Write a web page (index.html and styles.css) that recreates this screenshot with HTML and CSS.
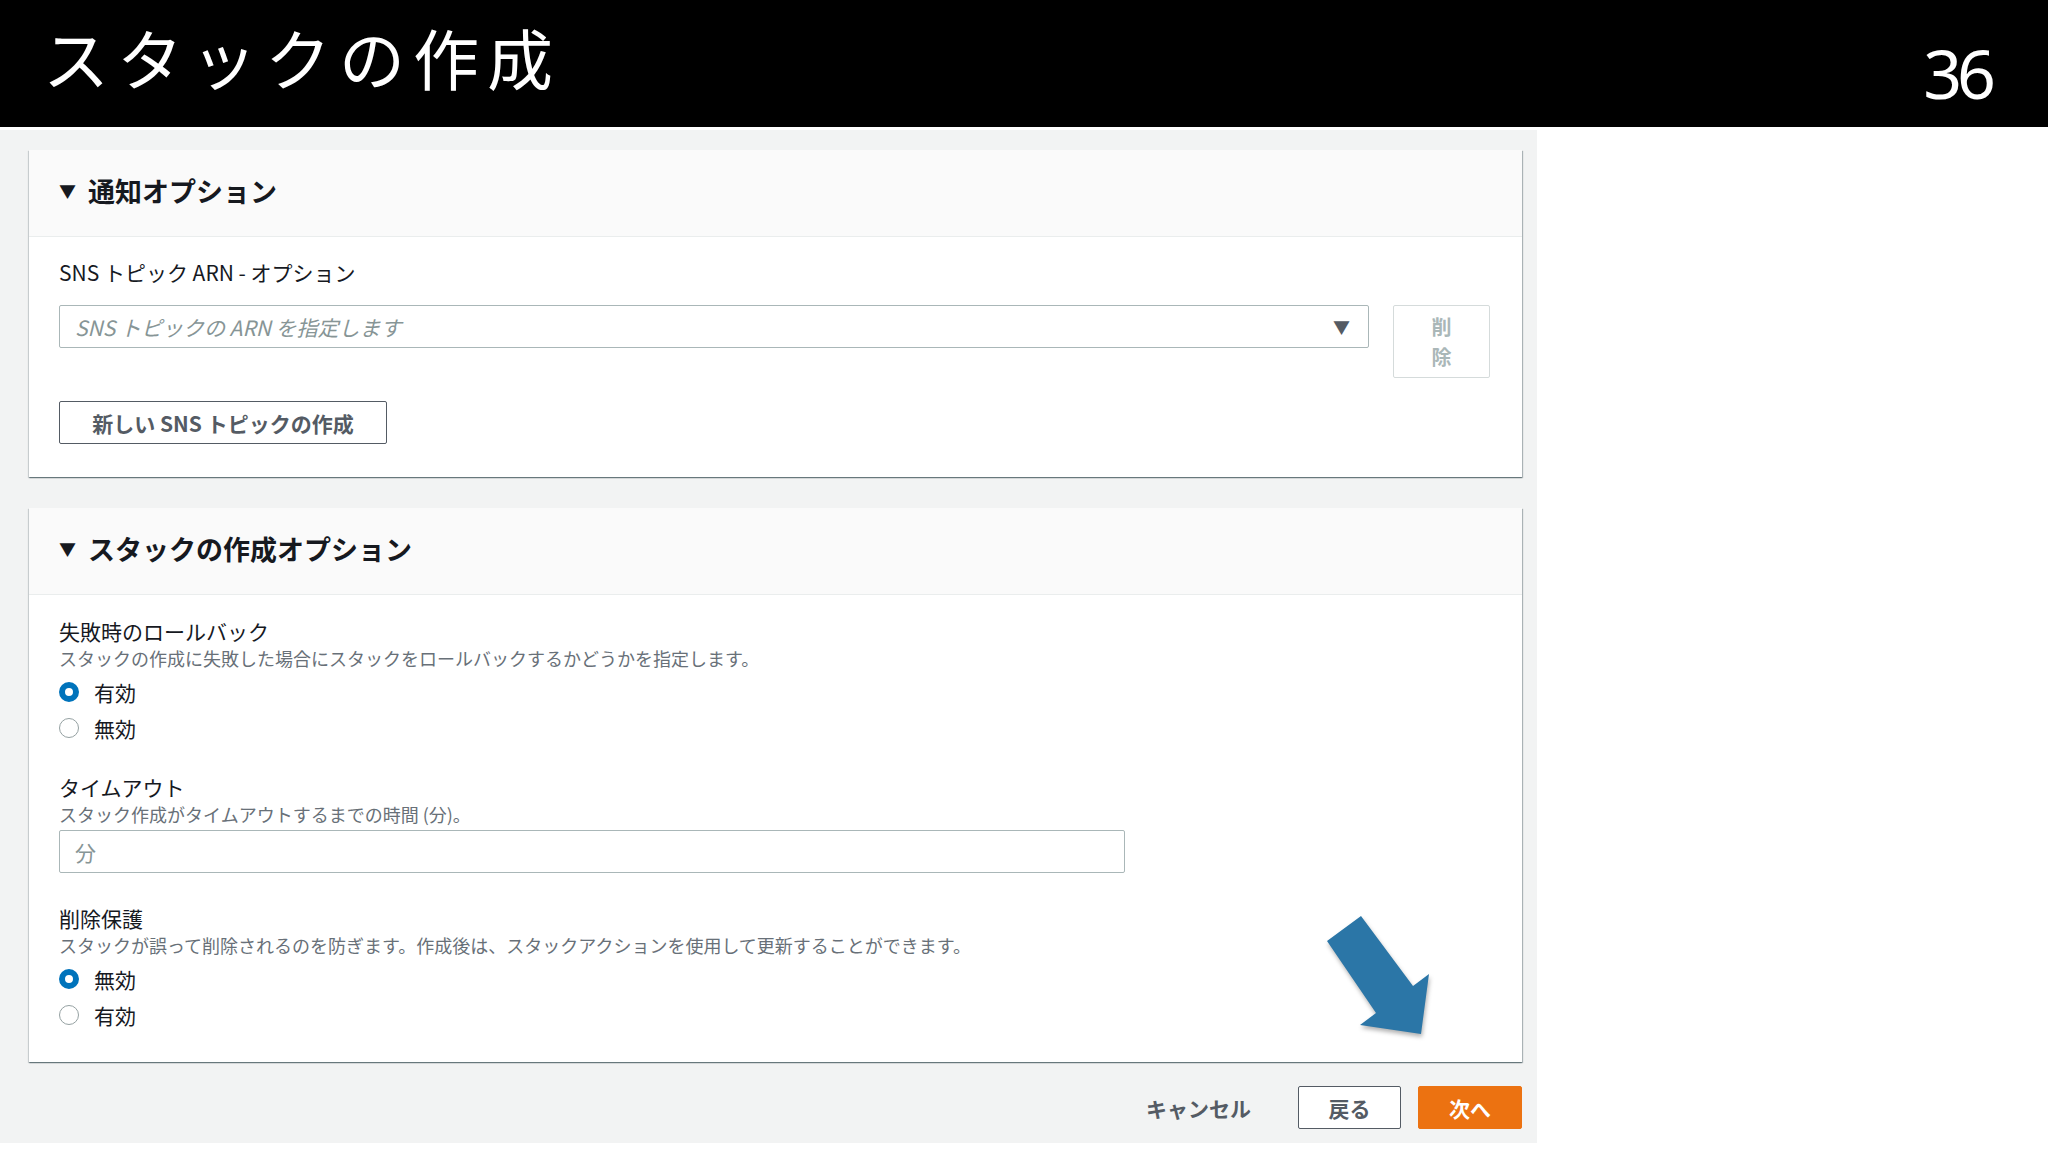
FILE: index.html
```html
<!DOCTYPE html>
<html lang="ja">
<head>
<meta charset="utf-8">
<title>スタックの作成</title>
<link rel="stylesheet" href="styles.css">
</head>
<body>
<div class="page">
  <header class="topbar">
    <h1 class="title">スタックの作成</h1>
    <div class="slide-no">36</div>
  </header>

  <main class="panel">
    <section class="card card-notify">
      <div class="card-head"><span class="caret">▼</span>通知オプション</div>
      <div class="card-body">
        <div class="label">SNS トピック ARN - オプション</div>
        <div class="select-row">
          <div class="select">
            <span class="placeholder">SNS トピックの ARN を指定します</span>
            <span class="select-caret">▼</span>
          </div>
          <div class="btn-remove"><span>削除</span></div>
        </div>
        <div class="btn btn-new">新しい SNS トピックの作成</div>
      </div>
    </section>

    <section class="card card-stack">
      <div class="card-head"><span class="caret">▼</span>スタックの作成オプション</div>
      <div class="card-body">
        <div class="field">
          <div class="label tight">失敗時のロールバック</div>
          <div class="desc">スタックの作成に失敗した場合にスタックをロールバックするかどうかを指定します。</div>
          <div class="radio-row"><span class="radio on"></span>有効</div>
          <div class="radio-row"><span class="radio"></span>無効</div>
        </div>
        <div class="field field-timeout">
          <div class="label tight">タイムアウト</div>
          <div class="desc">スタック作成がタイムアウトするまでの時間 (分)。</div>
          <div class="text-input"><span class="placeholder">分</span></div>
        </div>
        <div class="field field-protect">
          <div class="label tight">削除保護</div>
          <div class="desc">スタックが誤って削除されるのを防ぎます。作成後は、スタックアクションを使用して更新することができます。</div>
          <div class="radio-row"><span class="radio on"></span>無効</div>
          <div class="radio-row"><span class="radio"></span>有効</div>
        </div>
      </div>
    </section>

    <div class="footer">
      <div class="btn-link">キャンセル</div>
      <div class="btn btn-back">戻る</div>
      <div class="btn btn-next">次へ</div>
    </div>
  </main>

  <svg class="arrow" width="130" height="140" viewBox="0 0 130 140" aria-hidden="true">
    <polygon points="7,36 41,11 93,81 109,69 101,129 40,120 56,108" fill="#2b76a7"/>
  </svg>
</div>
</body>
</html>
```

FILE: styles.css
```css
* { box-sizing: border-box; }

html, body {
  margin: 0;
  padding: 0;
  background: #ffffff;
}

body {
  width: 2048px;
  height: 1152px;
  overflow: hidden;
  font-family: "Noto Sans CJK JP", "Noto Sans", sans-serif;
  color: #16191f;
}

.page {
  position: relative;
  width: 2048px;
  height: 1152px;
}

/* ---------- top bar ---------- */
.topbar {
  height: 127px;
  background: #000000;
  display: flex;
  justify-content: space-between;
  align-items: flex-start;
  padding: 0 57px 0 43px;
}

.title {
  margin: 16px 0 0 0;
  font-family: "Noto Sans CJK JP", sans-serif;
  font-weight: 400;
  font-size: 66px;
  line-height: 80px;
  letter-spacing: 8px;
  color: #ffffff;
}

.slide-no {
  margin-top: 33px;
  font-family: "Noto Sans", sans-serif;
  font-size: 68px;
  line-height: 80px;
  letter-spacing: -5px;
  color: #ffffff;
}

/* ---------- grey panel ---------- */
.panel {
  width: 1537px;
  height: 1013px;
  margin-top: 3px;
  background: #f2f3f3;
  padding: 20px 15px 0 29px;
}

.card {
  background: #ffffff;
  box-shadow: 0 1px 1px 0 rgba(0, 28, 36, 0.35),
              1px 1px 1px 0 rgba(0, 28, 36, 0.25),
              -1px 1px 1px 0 rgba(0, 28, 36, 0.12);
}

.card-notify { height: 327px; }
.card-stack { height: 554px; margin-top: 31px; }

.card-head {
  height: 87px;
  background: #fafafa;
  border-bottom: 1px solid #eaeded;
  display: flex;
  align-items: center;
  padding: 0 0 5px 30px;
  font-size: 27px;
  font-weight: 700;
  color: #16191f;
}

.caret {
  font-size: 17px;
  margin-right: 12px;
  color: #16191f;
}

.card-body {
  padding: 0 32px 0 30px;
}

.card-notify .card-body { padding-top: 21px; }
.card-stack .card-body { padding-top: 23px; }

.label {
  font-size: 21px;
  line-height: 28px;
  margin-bottom: 19px;
  color: #16191f;
}

.label.tight {
  line-height: 26px;
  margin-bottom: 1px;
}

.desc {
  font-size: 18px;
  line-height: 26px;
  color: #687078;
  margin-bottom: 3px;
}

/* select row */
.select-row {
  display: flex;
  gap: 24px;
  align-items: flex-start;
}

.select {
  flex: 1;
  height: 43px;
  border: 1px solid #aab7b8;
  border-radius: 2px;
  display: flex;
  align-items: center;
  justify-content: space-between;
  padding: 0 18px 0 15px;
}

.placeholder {
  font-size: 21px;
  font-style: italic;
  color: #879596;
}

.select-caret {
  font-size: 17px;
  color: #545b64;
}

.btn-remove {
  width: 97px;
  height: 73px;
  border: 1px solid #d5dbdb;
  border-radius: 2px;
  display: flex;
  align-items: center;
  justify-content: center;
  font-size: 20px;
  font-weight: 700;
  line-height: 30px;
  color: #aab7b8;
}

.btn-remove span {
  display: block;
  width: 1em;
  text-align: center;
}

/* buttons */
.btn {
  height: 43px;
  border-radius: 2px;
  display: flex;
  align-items: center;
  justify-content: center;
  font-size: 21px;
  font-weight: 700;
}

.btn-new {
  width: 328px;
  margin-top: 23px;
  border: 1px solid #545b64;
  color: #545b64;
  background: #ffffff;
}

/* radios */
.radio-row {
  height: 36px;
  display: flex;
  align-items: center;
  font-size: 21px;
  color: #16191f;
}

.radio {
  width: 20px;
  height: 20px;
  border-radius: 50%;
  border: 1.5px solid #95a1a2;
  background: #ffffff;
  margin: 0 15px 0 0;
}

.radio.on {
  border: 6px solid #0073bb;
}

.field-timeout { margin-top: 28px; }
.field-protect { margin-top: 32px; }

.text-input {
  width: 1066px;
  height: 43px;
  border: 1px solid #aab7b8;
  border-radius: 2px;
  display: flex;
  align-items: center;
  padding-left: 15px;
  margin-top: 3px;
}

.text-input .placeholder { font-style: normal; }

/* footer */
.footer {
  display: flex;
  justify-content: flex-end;
  align-items: center;
  margin-top: 24px;
}

.btn-link {
  font-size: 21px;
  font-weight: 700;
  color: #545b64;
  margin-right: 47px;
}

.btn-back {
  width: 103px;
  border: 1px solid #545b64;
  background: #ffffff;
  color: #545b64;
}

.btn-next {
  width: 104px;
  margin-left: 17px;
  background: #ec7211;
  border: 1px solid #ec7211;
  color: #ffffff;
}

/* annotation arrow */
.arrow {
  position: absolute;
  left: 1320px;
  top: 905px;
  filter: drop-shadow(1px 3px 2px rgba(0, 0, 0, 0.3));
}
```
